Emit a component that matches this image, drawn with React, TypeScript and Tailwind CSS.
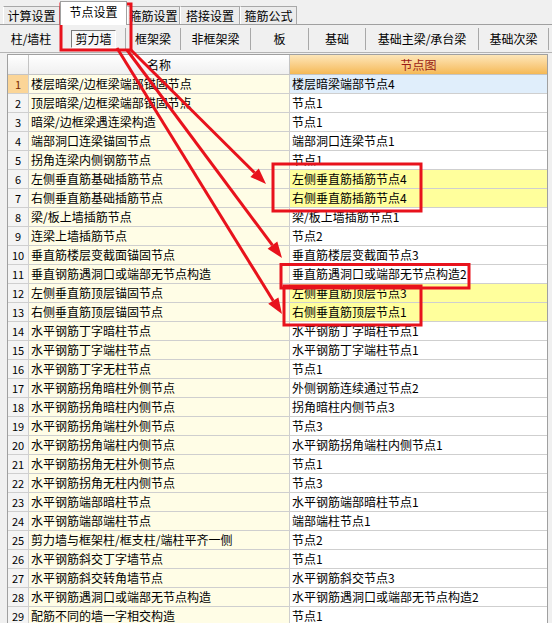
import React from 'react';

interface NodeRow {
  no: number;
  name: string;
  node: string;
  mark?: boolean;
}

const rows: NodeRow[] = [
  { no: 1, name: '楼层暗梁/边框梁端部锚固节点', node: '楼层暗梁端部节点4' },
  { no: 2, name: '顶层暗梁/边框梁端部锚固节点', node: '节点1' },
  { no: 3, name: '暗梁/边框梁遇连梁构造', node: '节点1' },
  { no: 4, name: '端部洞口连梁锚固节点', node: '端部洞口连梁节点1' },
  { no: 5, name: '拐角连梁内侧钢筋节点', node: '节点1' },
  { no: 6, name: '左侧垂直筋基础插筋节点', node: '左侧垂直筋插筋节点4', mark: true },
  { no: 7, name: '右侧垂直筋基础插筋节点', node: '右侧垂直筋插筋节点4', mark: true },
  { no: 8, name: '梁/板上墙插筋节点', node: '梁/板上墙插筋节点1' },
  { no: 9, name: '连梁上墙插筋节点', node: '节点2' },
  { no: 10, name: '垂直筋楼层变截面锚固节点', node: '垂直筋楼层变截面节点3' },
  { no: 11, name: '垂直钢筋遇洞口或端部无节点构造', node: '垂直筋遇洞口或端部无节点构造2' },
  { no: 12, name: '左侧垂直筋顶层锚固节点', node: '左侧垂直筋顶层节点3', mark: true },
  { no: 13, name: '右侧垂直筋顶层锚固节点', node: '右侧垂直筋顶层节点1', mark: true },
  { no: 14, name: '水平钢筋丁字暗柱节点', node: '水平钢筋丁字暗柱节点1' },
  { no: 15, name: '水平钢筋丁字端柱节点', node: '水平钢筋丁字端柱节点1' },
  { no: 16, name: '水平钢筋丁字无柱节点', node: '节点1' },
  { no: 17, name: '水平钢筋拐角暗柱外侧节点', node: '外侧钢筋连续通过节点2' },
  { no: 18, name: '水平钢筋拐角暗柱内侧节点', node: '拐角暗柱内侧节点3' },
  { no: 19, name: '水平钢筋拐角端柱外侧节点', node: '节点3' },
  { no: 20, name: '水平钢筋拐角端柱内侧节点', node: '水平钢筋拐角端柱内侧节点1' },
  { no: 21, name: '水平钢筋拐角无柱外侧节点', node: '节点1' },
  { no: 22, name: '水平钢筋拐角无柱内侧节点', node: '节点3' },
  { no: 23, name: '水平钢筋端部暗柱节点', node: '水平钢筋端部暗柱节点1' },
  { no: 24, name: '水平钢筋端部端柱节点', node: '端部端柱节点1' },
  { no: 25, name: '剪力墙与框架柱/框支柱/端柱平齐一侧', node: '节点2' },
  { no: 26, name: '水平钢筋斜交丁字墙节点', node: '节点1' },
  { no: 27, name: '水平钢筋斜交转角墙节点', node: '水平钢筋斜交节点3' },
  { no: 28, name: '水平钢筋遇洞口或端部无节点构造', node: '水平钢筋遇洞口或端部无节点构造2' },
  { no: 29, name: '配筋不同的墙一字相交构造', node: '节点1' },
];

const tabs = [
  { label: '计算设置', w: 'w-[57px]' },
  { label: '节点设置', w: 'w-[67px]', active: true },
  { label: '箍筋设置', w: 'w-[53px]' },
  { label: '搭接设置', w: 'w-[60px]' },
  { label: '箍筋公式', w: 'w-[57px]' },
];

function Sep() {
  return <div className="w-px h-[22px] bg-[#a8a8a8] shrink-0" />;
}

// red marks drawn on top of the screenshot
function Annotations() {
  return (
    <svg className="absolute inset-0 pointer-events-none" width="552" height="623" viewBox="0 0 552 623">
      <g fill="none" stroke="#e8121c" strokeWidth="3">
        <rect x="61" y="4" width="70" height="46" />
        <rect x="273" y="164" width="148" height="47" />
        <rect x="281" y="264.5" width="188" height="23.5" />
        <rect x="284" y="286" width="137" height="39" />
        <line x1="131" y1="50" x2="254.6" y2="172.7" />
        <line x1="127" y1="50" x2="272.4" y2="245.2" />
        <line x1="117" y1="48" x2="273.2" y2="300.8" />
      </g>
      <g fill="#e8121c">
        <polygon points="266,184 250.4,177 258.8,168.5" />
        <polygon points="282,258 267.6,248.8 277.3,241.6" />
        <polygon points="282,314 268.2,303.7 278.4,297.4" />
      </g>
    </svg>
  );
}

export default function App() {
  return (
    <div
      className="relative w-[552px] h-[623px] overflow-hidden bg-[#f0f0f0] text-[12px] text-black leading-none"
      style={{ fontFamily: '"Noto Sans CJK SC", "Noto Sans", sans-serif' }}
    >
      {/* Tabs */}
      <div className="relative h-[25px] flex items-end pl-[3px] border-b border-[#a0a0a0]">
        {tabs.map((t) =>
          t.active ? (
            <div
              key={t.label}
              className={`${t.w} h-[24px] -mb-px bg-white border border-b-0 border-[#a0a0a0] flex items-center justify-center pb-[3px] z-10`}
            >
              {t.label}
            </div>
          ) : (
            <div
              key={t.label}
              className={`${t.w} h-[18px] bg-[#ececec] border border-b-0 border-[#a8a8a8] border-l-white flex items-center justify-center`}
            >
              {t.label}
            </div>
          )
        )}
      </div>

      {/* Sub buttons */}
      <div className="h-[28px] flex items-center border-b border-[#b4b4b4]">
        <div className="w-[62px] flex justify-center">柱/墙柱</div>
        <div className="w-[63px] flex justify-center">
          <div className="w-[45px] h-[18px] border border-t-[#7a7a7a] border-l-[#7a7a7a] border-r-white border-b-white bg-[#f7f7f7] flex items-center justify-center">
            剪力墙
          </div>
        </div>
        <Sep />
        <div className="w-[54px] flex justify-center">框架梁</div>
        <Sep />
        <div className="w-[69px] flex justify-center">非框架梁</div>
        <Sep />
        <div className="w-[57px] flex justify-center">板</div>
        <Sep />
        <div className="w-[56px] flex justify-center">基础</div>
        <Sep />
        <div className="w-[112px] flex justify-center">基础主梁/承台梁</div>
        <Sep />
        <div className="w-[69px] flex justify-center">基础次梁</div>
        <Sep />
      </div>

      {/* Grid */}
      <div className="ml-[7px] mt-[1px] w-[541px] border border-[#a0a0a0] bg-white">
        <div className="flex h-[20px] border-b border-[#c4c4c4]">
          <div className="w-[21px] shrink-0 border-r border-[#c4c4c4] bg-gradient-to-b from-white to-[#eeeeee]" />
          <div className="w-[261px] shrink-0 border-r border-[#c4c4c4] bg-gradient-to-b from-white to-[#f0f0f0] flex items-center justify-center">
            名称
          </div>
          <div className="flex-1 bg-gradient-to-b from-[#fde6b8] to-[#f5b954] text-[#9a1a14] flex items-center justify-center">
            节点图
          </div>
        </div>
        {rows.map((r) => {
          const selected = r.no === 1;
          return (
            <div key={r.no} className="flex h-[19px] border-b border-[#cfcfcf]">
              <div
                className={`w-[21px] shrink-0 border-r border-[#cfcfcf] flex items-center justify-center text-[11px] ${
                  selected ? 'bg-[#fbd597] text-[#7a2a00]' : 'bg-[#f4f4f4]'
                }`}
              >
                {r.no}
              </div>
              <div className="w-[261px] shrink-0 border-r border-[#cfcfcf] bg-[#fffde6] flex items-center pl-[2px] whitespace-nowrap overflow-hidden">
                {r.name}
              </div>
              <div
                className={`flex-1 flex items-center pl-[2px] whitespace-nowrap overflow-hidden ${
                  selected ? 'bg-[#e0eefb]' : r.mark ? 'bg-[#ffff9c]' : 'bg-white'
                }`}
              >
                {r.node}
              </div>
            </div>
          );
        })}
      </div>

      <Annotations />
    </div>
  );
}
